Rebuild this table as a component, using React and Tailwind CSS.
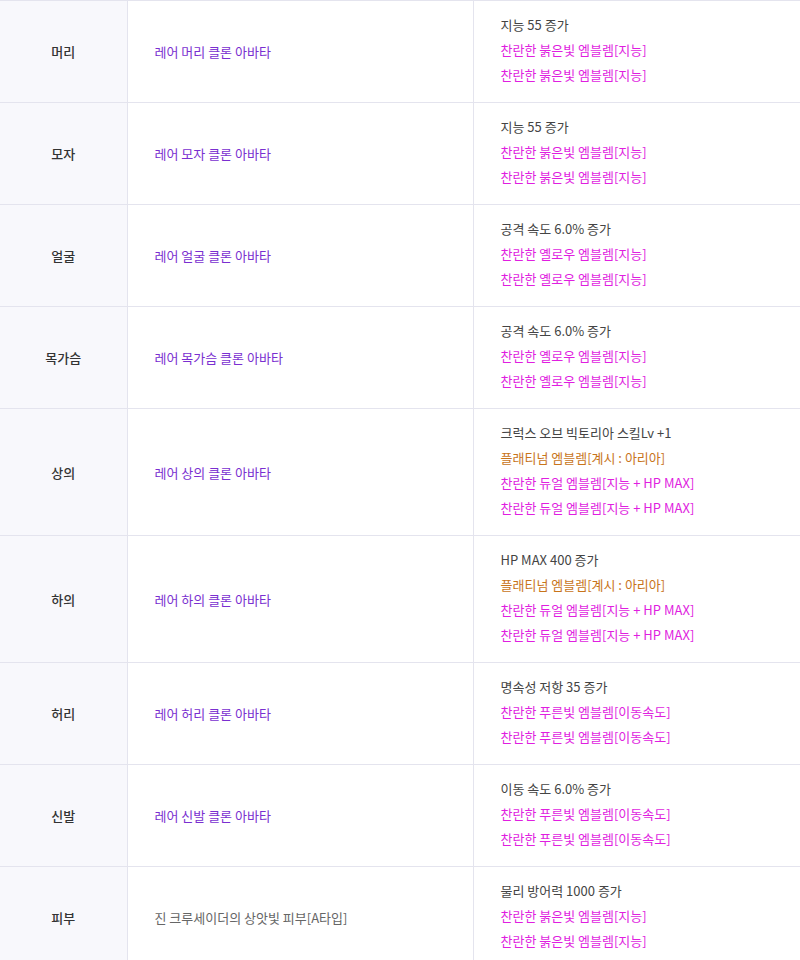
import React from 'react';

const GRAY = 'text-[#444]';
const PINK = 'text-[#e01ee0]';
const ORANGE = 'text-[#c8741a]';

const red = { text: '찬란한 붉은빛 엠블렘[지능]', color: PINK };
const yellow = { text: '찬란한 옐로우 엠블렘[지능]', color: PINK };
const dual = { text: '찬란한 듀얼 엠블렘[지능 + HP MAX]', color: PINK };
const plat = { text: '플래티넘 엠블렘[계시 : 아리아]', color: ORANGE };
const blue = { text: '찬란한 푸른빛 엠블렘[이동속도]', color: PINK };

const rows = [
  { slot: '머리', item: '레어 머리 클론 아바타', lines: [{ text: '지능 55 증가', color: GRAY }, red, red] },
  { slot: '모자', item: '레어 모자 클론 아바타', lines: [{ text: '지능 55 증가', color: GRAY }, red, red] },
  { slot: '얼굴', item: '레어 얼굴 클론 아바타', lines: [{ text: '공격 속도 6.0% 증가', color: GRAY }, yellow, yellow] },
  { slot: '목가슴', item: '레어 목가슴 클론 아바타', lines: [{ text: '공격 속도 6.0% 증가', color: GRAY }, yellow, yellow] },
  { slot: '상의', item: '레어 상의 클론 아바타', lines: [{ text: '크럭스 오브 빅토리아 스킬Lv +1', color: GRAY }, plat, dual, dual] },
  { slot: '하의', item: '레어 하의 클론 아바타', lines: [{ text: 'HP MAX 400 증가', color: GRAY }, plat, dual, dual] },
  { slot: '허리', item: '레어 허리 클론 아바타', lines: [{ text: '명속성 저항 35 증가', color: GRAY }, blue, blue] },
  { slot: '신발', item: '레어 신발 클론 아바타', lines: [{ text: '이동 속도 6.0% 증가', color: GRAY }, blue, blue] },
  { slot: '피부', item: '진 크루세이더의 상앗빛 피부[A타입]', plain: true, lines: [{ text: '물리 방어력 1000 증가', color: GRAY }, red, red] },
];

export default function App() {
  return (
    <div className="w-[800px] bg-white text-[13px] leading-[25px] font-['Noto_Sans_CJK_KR','Noto_Sans',sans-serif]">
      <table className="w-full border-collapse">
        <tbody>
          {rows.map((r, i) => (
            <tr key={i} className="border-y border-[#e4e4ee]">
              <td className="w-[127px] bg-[#f8f8fc] border-r border-[#e4e4ee] text-center font-medium text-[#333]">
                {r.slot}
              </td>
              <td className={`w-[346px] border-r border-[#e4e4ee] pl-[27px] ${r.plain ? 'text-[#666]' : 'text-[#7a2fd0]'}`}>
                {r.item}
              </td>
              <td className="pl-[27px] pt-[11px] pb-[15px]">
                {r.lines.map((l, j) => (
                  <div key={j} className={l.color}>{l.text}</div>
                ))}
              </td>
            </tr>
          ))}
        </tbody>
      </table>
    </div>
  );
}
